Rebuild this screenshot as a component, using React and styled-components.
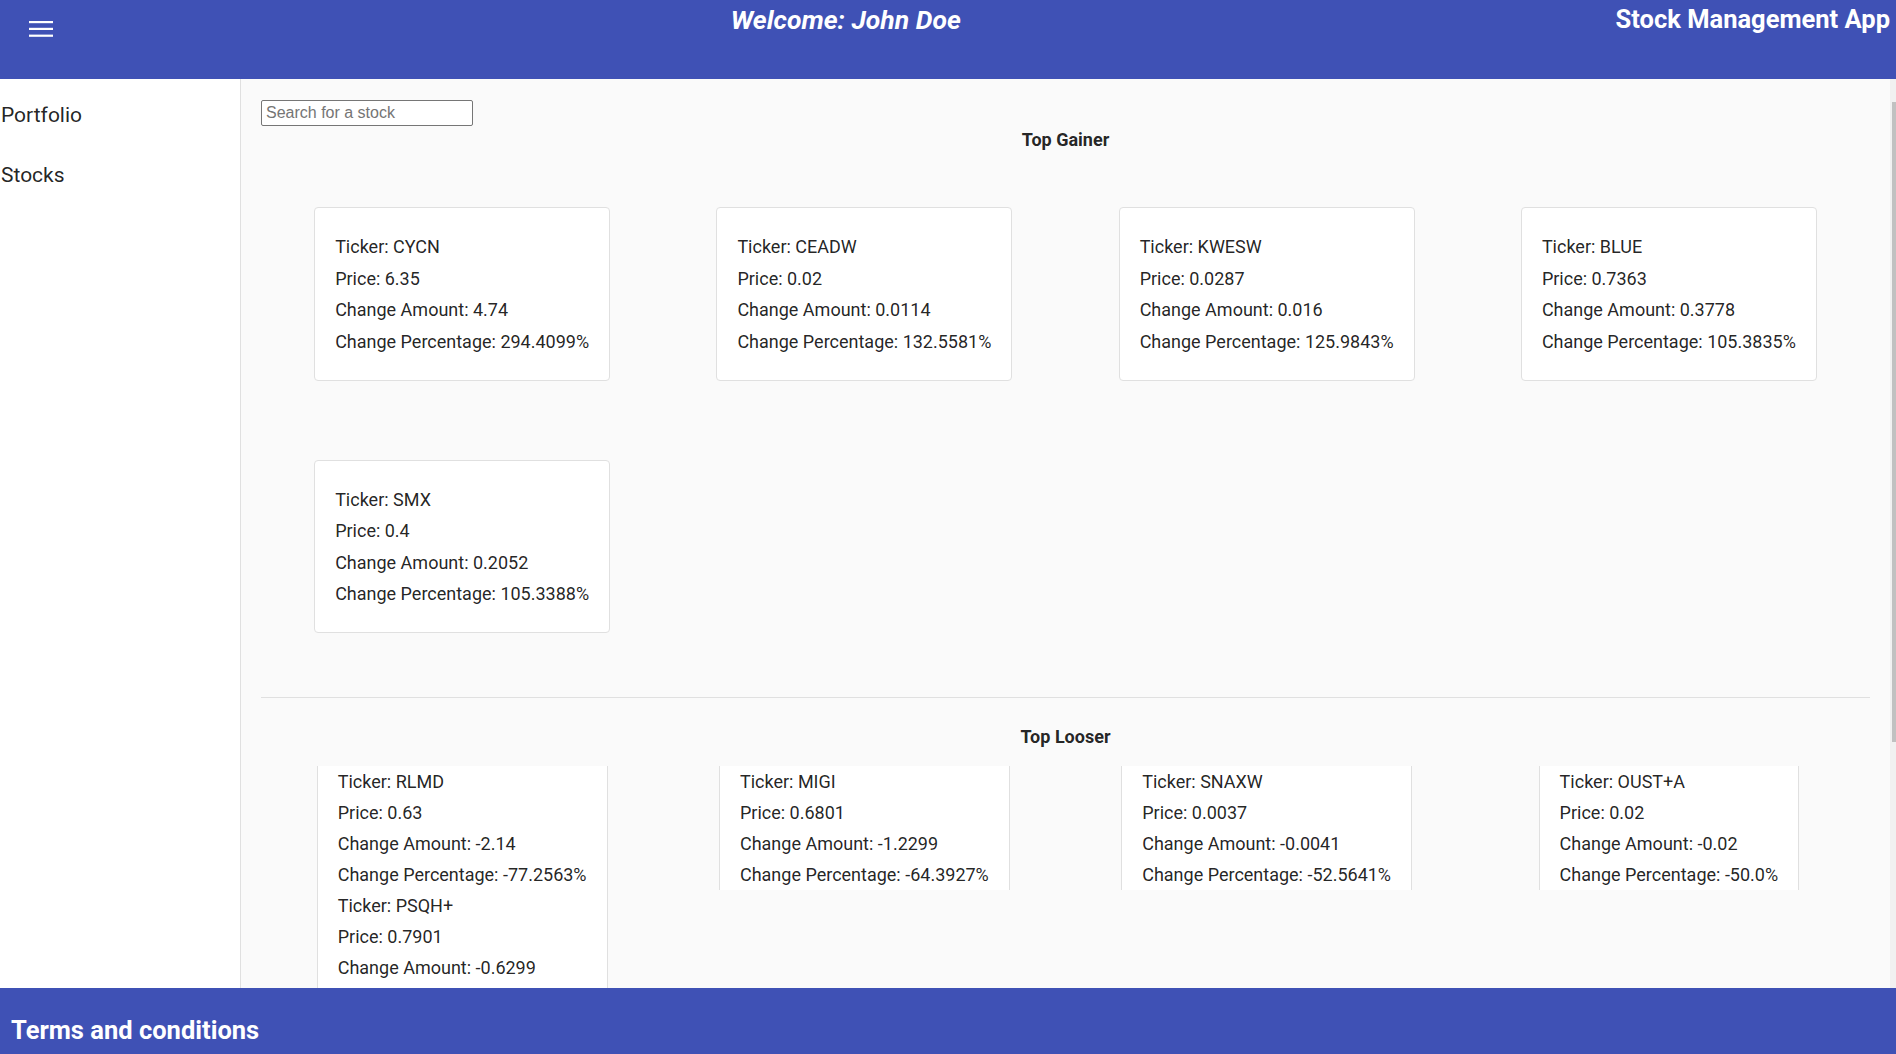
import React from 'react'
import styled, { createGlobalStyle } from 'styled-components'

const GlobalStyle = createGlobalStyle`
  html, body {
    margin: 0;
    height: 100%;
    overflow: hidden;
  }
  body {
    font-family: Roboto, "Noto Sans", sans-serif;
    color: rgba(0, 0, 0, 0.87);
  }
  * {
    box-sizing: border-box;
  }
`

const gainers = [
  { ticker: 'CYCN', price: '6.35', amount: '4.74', pct: '294.4099%' },
  { ticker: 'CEADW', price: '0.02', amount: '0.0114', pct: '132.5581%' },
  { ticker: 'KWESW', price: '0.0287', amount: '0.016', pct: '125.9843%' },
  { ticker: 'BLUE', price: '0.7363', amount: '0.3778', pct: '105.3835%' },
  { ticker: 'SMX', price: '0.4', amount: '0.2052', pct: '105.3388%' },
]

const losers = [
  { ticker: 'RLMD', price: '0.63', amount: '-2.14', pct: '-77.2563%' },
  { ticker: 'MIGI', price: '0.6801', amount: '-1.2299', pct: '-64.3927%' },
  { ticker: 'SNAXW', price: '0.0037', amount: '-0.0041', pct: '-52.5641%' },
  { ticker: 'OUST+A', price: '0.02', amount: '-0.02', pct: '-50.0%' },
  { ticker: 'PSQH+', price: '0.7901', amount: '-0.6299', pct: '-44.3592%' },
]

const Page = styled.div`
  display: flex;
  flex-direction: column;
  height: 100vh;
`

const Header = styled.header`
  flex: 0 0 79px;
  display: flex;
  justify-content: space-between;
  align-items: flex-start;
  background-color: #3f51b5;
  color: #fff;
  padding-right: 6px;
`

const MenuButton = styled.button`
  width: 76px;
  height: 60px;
  padding: 21px 0 0 29px;
  border: none;
  background: transparent;
  display: flex;
  align-items: flex-start;
  cursor: pointer;
`

const Welcome = styled.h1`
  margin: 0;
  padding-top: 5px;
  font-size: 26.5px;
  font-weight: 700;
  font-style: italic;
  line-height: 30px;
`

const AppTitle = styled.h1`
  margin: 0;
  padding-top: 5px;
  font-size: 25.5px;
  font-weight: 700;
  line-height: 29px;
`

const Body = styled.div`
  flex: 1;
  display: flex;
  min-height: 0;
`

const Sidebar = styled.nav`
  flex: 0 0 241px;
  background: #fff;
  border-right: 1px solid #e0e0e0;
`

const NavItem = styled.a`
  display: block;
  padding: 24px 0 11px 1px;
  font-size: 21px;
  line-height: 25px;
  color: rgba(0, 0, 0, 0.87);
  text-decoration: none;
  cursor: pointer;
`

const Main = styled.main`
  flex: 1;
  background: #fafafa;
  padding: 21px 20px 320px;
  overflow-y: auto;
  scrollbar-width: none;
`

const ScrollTrack = styled.div`
  flex: 0 0 6px;
  background: #f1f1f1;
  padding-top: 23px;
`

const ScrollThumb = styled.div`
  height: 640px;
  margin-left: 2px;
  background: #c1c1c1;
`

const Search = styled.input`
  display: block;
  width: 212px;
  height: 26px;
  padding: 1px 4px;
  border: 1px solid #767676;
  border-radius: 2px;
  background: #fff;
  font: 16px "Liberation Sans", Arial, sans-serif;
  &::placeholder {
    color: #757575;
  }
`

const SectionTitle = styled.h2`
  margin: ${p => p.$top}px 0 0;
  text-align: center;
  font-size: 18px;
  font-weight: 700;
  line-height: 21px;
  color: rgba(0, 0, 0, 0.87);
`

const Grid = styled.div`
  display: grid;
  grid-template-columns: repeat(4, 1fr);
  justify-items: center;
  align-items: start;
  row-gap: ${p => p.$rowGap}px;
  margin-top: ${p => p.$top}px;
`

const GainerCard = styled.div`
  width: 296px;
  padding: 23px 20px 22.5px;
  background: #fff;
  border: 1px solid #e0e0e0;
  border-radius: 4px;
  font-size: 18px;
  line-height: 31.5px;
`

const LoserCard = styled.div`
  padding: 0 20px;
  background: #fff;
  border-left: 1px solid #e0e0e0;
  border-right: 1px solid #e0e0e0;
  font-size: 18px;
  line-height: 31px;
`

const Line = styled.div`
  white-space: nowrap;
`

const Divider = styled.hr`
  margin: 64px 0 0;
  border: none;
  border-top: 1px solid #e0e0e0;
`

const Footer = styled.footer`
  flex: 0 0 66px;
  background-color: #3f51b5;
  color: #fff;
  padding: 28px 11px 0;
  font-size: 25.5px;
  font-weight: 700;
  line-height: 29px;
`

const MenuIcon = () => (
  <svg width="24" height="16" viewBox="0 0 24 16" fill="#fff">
    <rect x="0" y="0" width="24" height="2.2" />
    <rect x="0" y="6.8" width="24" height="2.2" />
    <rect x="0" y="13.6" width="24" height="2.2" />
  </svg>
)

const StockInfo = ({ s }) => (
  <>
    <Line>Ticker: {s.ticker}</Line>
    <Line>Price: {s.price}</Line>
    <Line>Change Amount: {s.amount}</Line>
    <Line>Change Percentage: {s.pct}</Line>
  </>
)

const App = () => {
  return (
    <Page>
      <GlobalStyle />
      <Header>
        <MenuButton aria-label="menu">
          <MenuIcon />
        </MenuButton>
        <Welcome>Welcome: John Doe</Welcome>
        <AppTitle>Stock Management App</AppTitle>
      </Header>
      <Body>
        <Sidebar>
          <NavItem>Portfolio</NavItem>
          <NavItem>Stocks</NavItem>
        </Sidebar>
        <Main>
          <Search placeholder="Search for a stock" />
          <SectionTitle $top={3}>Top Gainer</SectionTitle>
          <Grid $top={57} $rowGap={79}>
            {gainers.map(s => (
              <GainerCard key={s.ticker}>
                <StockInfo s={s} />
              </GainerCard>
            ))}
          </Grid>
          <Divider />
          <SectionTitle $top={28}>Top Looser</SectionTitle>
          <Grid $top={19} $rowGap={0}>
            {losers.map(s => (
              <LoserCard key={s.ticker}>
                <StockInfo s={s} />
              </LoserCard>
            ))}
          </Grid>
        </Main>
        <ScrollTrack>
          <ScrollThumb />
        </ScrollTrack>
      </Body>
      <Footer>Terms and conditions</Footer>
    </Page>
  )
}

export default App
